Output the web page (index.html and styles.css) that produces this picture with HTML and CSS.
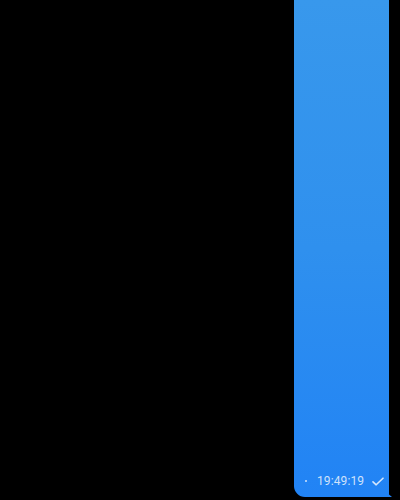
FILE: index.html
```html
<!DOCTYPE html>
<html>
<head>
<meta charset="utf-8">
<link rel="stylesheet" href="styles.css">
</head>
<body>
<div class="chat">
  <div class="bubble">
    <div class="body"></div>
    <div class="meta">
      <span class="dot"></span>
      <span class="time">19:49:19</span>
      <svg class="check" width="12" height="9" viewBox="0 0 12 9"><path d="M1 4.8 L4.2 7.8 L11 1.2" fill="none" stroke="#d6e7fc" stroke-width="1.6" stroke-linecap="round" stroke-linejoin="round"/></svg>
    </div>
    <span class="tail"></span>
  </div>
</div>
</body>
</html>
```
FILE: styles.css
```css
html, body {
  margin: 0;
  padding: 0;
  background: #000;
  height: 500px;
  overflow: hidden;
}
.chat {
  display: flex;
  justify-content: flex-end;
  padding-right: 11px;
  height: 500px;
}
.bubble {
  position: relative;
  width: 95px;
  height: 497px;
  background: linear-gradient(to bottom, #3898ec 0%, #2f90ee 50%, #2183f5 100%);
  border-radius: 0 0 3px 11px;
  display: flex;
  flex-direction: column;
}
.body {
  flex: 1;
}
.meta {
  display: flex;
  align-items: center;
  height: 26px;
  padding: 0 0 6px 11px;
  box-sizing: border-box;
  font-family: Roboto, "Liberation Sans", sans-serif;
  font-size: 12px;
  color: #cfe2fb;
}
.dot {
  width: 2px;
  height: 2px;
  border-radius: 50%;
  background: #cfe2fb;
  margin-right: 10px;
}
.time {
  letter-spacing: 0.1px;
}
.check {
  margin-left: 8px;
  display: block;
}
.tail {
  position: absolute;
  right: -3px;
  bottom: 0;
  width: 6px;
  height: 5px;
  background: #2183f5;
  clip-path: polygon(0 0, 100% 100%, 0 100%);
}
```
